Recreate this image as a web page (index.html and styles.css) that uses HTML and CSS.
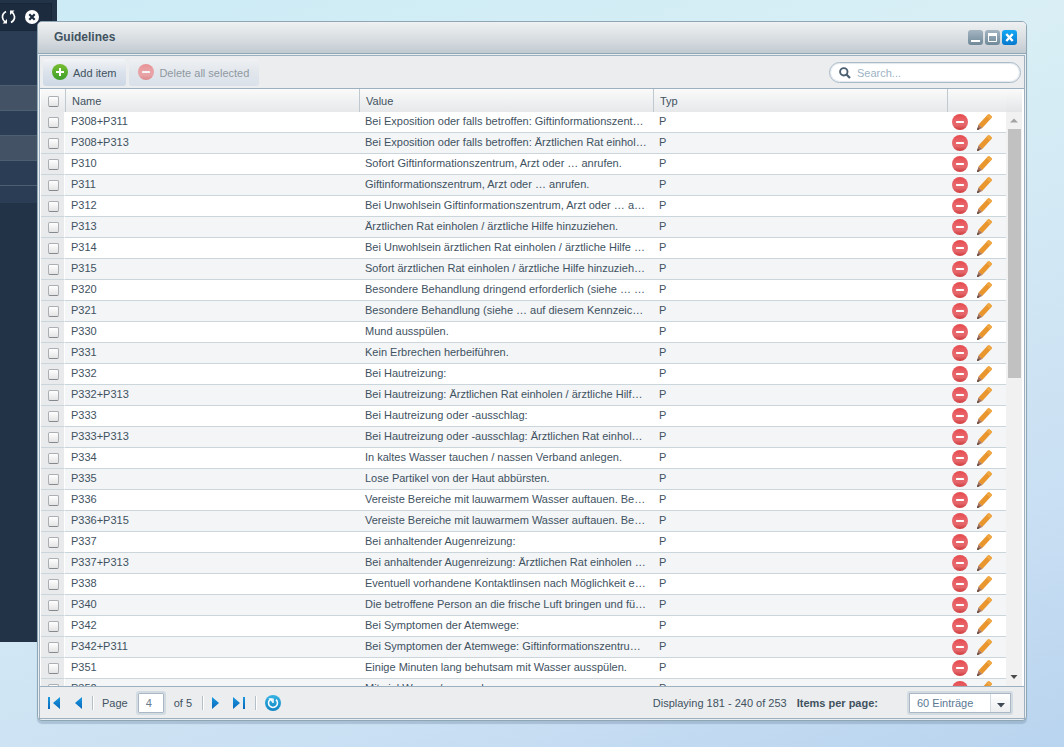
FILE: index.html
```
<!DOCTYPE html>
<html lang="en">
<head>
<meta charset="utf-8">
<title>Guidelines</title>
<link rel="stylesheet" href="styles.css">
</head>
<body>
<svg class="defs" aria-hidden="true">
  <linearGradient id="red" x1="0" y1="0" x2="0" y2="1"><stop offset="0" stop-color="#e64a4d"/><stop offset=".45" stop-color="#e8666b"/><stop offset=".7" stop-color="#e5676b"/><stop offset="1" stop-color="#cf3b3d"/></linearGradient>
  <linearGradient id="green" x1="0" y1="0" x2="0" y2="1"><stop offset="0" stop-color="#76bd30"/><stop offset="1" stop-color="#3f9f2d"/></linearGradient>
  <linearGradient id="blue" x1="0" y1="0" x2="0" y2="1"><stop offset="0" stop-color="#36b3e3"/><stop offset="1" stop-color="#1285c4"/></linearGradient>
  <linearGradient id="arrow" x1="0" y1="0" x2="0" y2="1"><stop offset="0" stop-color="#1a98e0"/><stop offset="1" stop-color="#0768bb"/></linearGradient>
  <symbol id="minus" viewBox="0 0 16 16"><circle cx="8" cy="8" r="8" fill="url(#red)"/><rect x="4" y="7" width="8" height="2" rx=".4" fill="#fff"/></symbol>
  <symbol id="plus" viewBox="0 0 16 16"><circle cx="8" cy="8" r="8" fill="url(#green)"/><path d="M4 8h8M8 4v8" stroke="#fff" stroke-width="2"/></symbol>
  <symbol id="pencil" viewBox="0 0 16 16"><path d="M1.500 10.600L10.600.7q1-1 2-.2l1.800 1.500q.9.900 0 2L5.300 14z" fill="#e9962e"/><path d="M9.200 2.200L10.600.7q1-1 2-.2l1.800 1.500q.9.900 0 2L13 5.500z" fill="#efa744"/><path d="M1.500 10.600L5.300 14 .7 16H0z" fill="#a4705a"/><path d="M.6 13.400L0 16h.7l2.200-1z" fill="#5d453c"/></symbol>
</svg>

<aside class="sidebar">
  <div class="side-bar">
    <button class="bare" type="button" aria-label="Refresh"><svg width="15" height="14" viewBox="0 0 15 14"><g fill="none" stroke="#fff" stroke-width="1.700"><path d="M5 1.500C2.500 3 1.200 5 1.500 7.500 1.700 9.500 2.700 11 4.200 12"/><path d="M10 12.500c2.500-1.500 3.800-3.500 3.500-6C13.300 4.500 12.300 3 10.800 2"/></g><path d="M6 9v4.500H1.500zM9 5V.5h4.500z" fill="#fff"/></svg></button>
    <button class="bare" type="button" aria-label="Close"><svg width="14" height="14" viewBox="0 0 14 14"><circle cx="7" cy="7" r="7" fill="#fff"/><path d="M4.300 4.300l5.400 5.400M9.700 4.300L4.300 9.700" stroke="#1c2b3d" stroke-width="2.200"/></svg></button>
  </div>
  <div class="side-space"></div>
  <div class="side-item light"></div>
  <div class="side-item"></div>
  <div class="side-item light"></div>
  <div class="side-item"></div>
  <div class="side-end"></div>
</aside>

<main class="window">
  <header class="titlebar">
    <h1>Guidelines</h1>
    <div class="tools">
      <button type="button" aria-label="Minimize"><svg width="15" height="15"><path d="M3 11h9" stroke="#fff" stroke-width="2"/></svg></button>
      <button type="button" aria-label="Maximize"><svg width="15" height="15"><path d="M3.500 4v7.500h8V4" fill="none" stroke="#fff"/><path d="M3 4.500h9" stroke="#fff" stroke-width="3"/></svg></button>
      <button type="button" class="close" aria-label="Close window"><svg width="15" height="15"><path d="M4.300 4l6.400 7M10.700 4L4.300 11" stroke="#fff" stroke-width="2.400"/></svg></button>
    </div>
  </header>
  <section class="panel">
    <div class="toolbar">
      <button class="btn" type="button"><svg width="16" height="16"><use href="#plus"/></svg>Add item</button>
      <button class="btn" type="button" disabled><svg width="16" height="16"><use href="#minus"/></svg>Delete all selected</button>
      <label class="search"><svg width="12" height="12" viewBox="0 0 12 12"><circle cx="4.800" cy="4.800" r="3.700" fill="none" stroke="#4a5f70" stroke-width="1.900"/><path d="M7.500 7.500L11 11" stroke="#4a5f70" stroke-width="2.200"/></svg><input type="search" placeholder="Search..." aria-label="Search"></label>
    </div>
    <div class="grid">
      <table>
        <colgroup><col class="c-check"><col><col><col><col class="c-act"></colgroup>
        <thead><tr><th><input type="checkbox" aria-label="Select all"></th><th>Name</th><th>Value</th><th>Typ</th><th></th></tr></thead>
        <tbody id="rows"></tbody>
      </table>
      <div class="scroll" aria-hidden="true">
        <div class="scroll-head"></div>
        <svg width="16" height="16"><path d="M4 10.500h8l-4-4z" fill="#a3a3a3"/></svg>
        <div class="track"><div class="thumb"></div></div>
        <svg width="16" height="16"><path d="M4.500 5h7L8 9z" fill="#4a4a4a"/></svg>
      </div>
    </div>
    <footer class="pager">
      <button class="nav" type="button" aria-label="First page"><svg width="13" height="12"><path d="M0 0h2v12H0zM12 0v12L5 6z" fill="url(#arrow)"/></svg></button>
      <button class="nav" type="button" aria-label="Previous page"><svg width="7" height="12"><path d="M7 0v12L0 6z" fill="url(#arrow)"/></svg></button>
      <span class="sep"></span>
      <label for="page">Page</label>
      <input id="page" class="page" type="text" value="4">
      <span>of 5</span>
      <span class="sep"></span>
      <button class="nav" type="button" aria-label="Next page"><svg width="7" height="12"><path d="M0 0v12l7-6z" fill="url(#arrow)"/></svg></button>
      <button class="nav" type="button" aria-label="Last page"><svg width="12" height="12"><path d="M10 0h2v12h-2zM0 0v12l7-6z" fill="url(#arrow)"/></svg></button>
      <span class="sep"></span>
      <button class="nav" type="button" aria-label="Reload"><svg width="16" height="16" viewBox="0 0 16 16"><circle cx="8" cy="8" r="8" fill="url(#blue)"/><path d="M11 4.600A4.500 4.500 0 1 1 5 4.600M8 8V3.500" fill="none" stroke="#fff" stroke-width="1.500"/><path d="M3.300 3.200h4.200v4.300z" fill="#fff"/></svg></button>
      <span class="info">Displaying 181 - 240 of 253</span>
      <label class="ipp" for="size">Items per page:</label>
      <span class="combo"><select id="size"><option>60 Einträge</option></select><span class="trigger"><svg width="8" height="5"><path d="M0 0h8L4 4.500z" fill="#3f4a55"/></svg></span></span>
    </footer>
  </section>
</main>
<script src="rows.js"></script>
</body>
</html>
```
FILE: styles.css
```
* { box-sizing: border-box; }
html { height: 100%; }
body {
  margin: 0; min-height: 100%; overflow: hidden; position: relative;
  font: 11px/14px "Liberation Sans", Arial, sans-serif; color: #41525f;
  background: linear-gradient(160deg, #cbebf6 0%, #d9eff5 35%, #c9dff3 78%, #b9d4ef 100%);
}
button, input, select { font: inherit; color: inherit; margin: 0; }
button { border: 0; padding: 0; background: none; }
svg { display: block; flex: none; }
.defs { position: absolute; width: 0; height: 0; }

.sidebar { position: absolute; left: 0; top: 0; bottom: 105px; width: 57px; background: #223348; }
.side-bar { height: 28px; margin: 3px 5px 0 0; padding: 0 12px 0 1px; display: flex; align-items: center; justify-content: space-between; background: #1c2b3d; border: 1px solid #18263a; border-left: 0; }
.side-space { height: 54px; background: #2b3d54; }
.side-item { height: 25px; background: #2b3d54; border-top: 1px solid #4d6072; }
.side-item.light { background: #435365; }
.side-end { height: 18px; background: #2b3d54; border-top: 1px solid #4d6072; }

.window {
  position: absolute; left: 37px; top: 21px; right: 37px; bottom: 26px;
  display: flex; flex-direction: column; padding: 0 1px 1px;
  border: 1px solid #8fa6b5; border-radius: 5px; background: #e9eef2;
  box-shadow: 0 3px 1px rgba(120, 145, 170, .4);
}
.titlebar {
  height: 32px; margin: 0 -1px 1px; padding: 0 9px 0 16px; border-radius: 4px 4px 0 0; border-bottom: 1px solid #8fa6b5;
  display: flex; align-items: center; justify-content: space-between;
  background: linear-gradient(#eff1f2, #dadfe2 50%, #c2cad2);
}
h1 { margin: 0; padding-bottom: 2px; font-size: 12px; line-height: 16px; color: #41525f; }
.tools { display: flex; gap: 2px; }
.tools button { border-radius: 3px; background: linear-gradient(#a4b5c1, #708999); }
.tools .close { background: linear-gradient(#14a9f5, #0678cd); }

.panel { flex: 1; min-height: 0; display: flex; flex-direction: column; border: 1px solid #9db0bf; background: #ebedef; }
.toolbar { height: 33px; padding: 1px 3px 0; display: flex; align-items: center; gap: 3px; border-bottom: 1px solid #9db0bf; }
.btn { height: 27px; padding: 0 10px 0 9px; display: flex; align-items: center; gap: 5px; border-radius: 3px; background: linear-gradient(#f2f4f6, #dbe2eb 50%, #cdd8e5); }
.btn svg { margin-bottom: 2px; }
.btn:disabled { opacity: .55; }
.search { flex: 0 1 192px; height: 21px; margin-left: auto; padding: 0 9px; display: flex; align-items: center; gap: 6px; border: 1px solid #a9bac8; border-radius: 11px; background: #fff; box-shadow: inset 0 0 1px 1px #e1e7ec; }
.search input { flex: 1; min-width: 0; border: 0; padding: 0; background: none; outline: 0; }
.search input::placeholder { color: #9db4c5; }

.grid { flex: 1; min-height: 0; overflow: hidden; display: flex; background: #fff; padding: 0 2px 0 1px; }
table { flex: 1; width: 100%; min-width: 0; align-self: flex-start; table-layout: fixed; border-collapse: separate; border-spacing: 0; }
.c-check { width: 24px; }
.c-act { width: 59px; }
th { height: 23px; padding: 1px 6px 0; text-align: left; font-weight: normal; background: linear-gradient(#fafafa, #e6e8ea); border-left: 1px solid #c0c9d0; }
th:first-child { border-left: 0; }
td { height: 21px; padding: 0 6px 2px; border-bottom: 1px solid #cbd5dc; white-space: nowrap; overflow: hidden; text-overflow: ellipsis; }
tr:nth-child(even) td { background: #f3f5f7; }
td:first-child, tr:nth-child(even) td:first-child { background: #e8eaec; border-right: 1px solid #fff; }
th:first-child, td:first-child { padding: 1px 0 0 7px; line-height: 0; }
input[type="checkbox"] { appearance: none; display: block; width: 11px; height: 11px; border: 1px solid #abafb3; border-bottom-color: #85898d; border-radius: 2px; background: linear-gradient(#fff, #e4e4e4); }
td:last-child { padding: 0 0 0 5px; }
.actions { display: flex; gap: 9px; }

.scroll { flex: 0 0 16px; display: flex; flex-direction: column; background: #f1f1f1; }
.scroll-head { height: 23px; background: linear-gradient(#fafafa, #e3e5e7); }
.track { flex: 1; padding: 1px 1px 0 2px; }
.thumb { height: 46%; background: #c1c1c1; }

.pager { height: 32px; padding: 0 13px 0 8px; display: flex; align-items: center; border-top: 1px solid #9db0bf; white-space: nowrap; }
.nav { margin-right: 10px; }
.nav + .nav { margin-left: 4px; }
.sep { width: 2px; height: 14px; margin-right: 8px; border-left: 1px solid #b5bfc7; border-right: 1px solid #fff; }
.page { width: 26px; height: 20px; margin: 0 10px; padding: 0 7px; border: 1px solid #a9b8c4; background: #fff; color: #667b8c; outline: 2px solid #d3dbe2; outline-offset: 0; border-radius: 1px; }
.page + span { margin-right: 10px; }
.info { margin-left: auto; }
.ipp { margin: 0 31px 0 10px; font-weight: bold; }
.combo { position: relative; display: flex; width: 102px; height: 20px; outline: 2px solid #d3dbe2; border-radius: 1px; }
.combo select { appearance: none; flex: 1; width: 100%; padding: 0 7px; border: 1px solid #a9b8c4; border-radius: 0; background: #fff; color: #5b7894; }
.trigger { position: absolute; right: 1px; top: 1px; bottom: 1px; width: 20px; display: flex; align-items: end; justify-content: center; padding-bottom: 4px; border-left: 1px solid #d3dbe2; background: linear-gradient(#fff, #eceef0); pointer-events: none; }
```
FILE: rows.js
```
const rows = [
  ["P308+P311", "Bei Exposition oder falls betroffen: Giftinformationszent…"],
  ["P308+P313", "Bei Exposition oder falls betroffen: Ärztlichen Rat einhol…"],
  ["P310", "Sofort Giftinformationszentrum, Arzt oder … anrufen."],
  ["P311", "Giftinformationszentrum, Arzt oder … anrufen."],
  ["P312", "Bei Unwohlsein Giftinformationszentrum, Arzt oder … a…"],
  ["P313", "Ärztlichen Rat einholen / ärztliche Hilfe hinzuziehen."],
  ["P314", "Bei Unwohlsein ärztlichen Rat einholen / ärztliche Hilfe …"],
  ["P315", "Sofort ärztlichen Rat einholen / ärztliche Hilfe hinzuzieh…"],
  ["P320", "Besondere Behandlung dringend erforderlich (siehe … …"],
  ["P321", "Besondere Behandlung (siehe … auf diesem Kennzeic…"],
  ["P330", "Mund ausspülen."],
  ["P331", "Kein Erbrechen herbeiführen."],
  ["P332", "Bei Hautreizung:"],
  ["P332+P313", "Bei Hautreizung: Ärztlichen Rat einholen / ärztliche Hilf…"],
  ["P333", "Bei Hautreizung oder -ausschlag:"],
  ["P333+P313", "Bei Hautreizung oder -ausschlag: Ärztlichen Rat einhol…"],
  ["P334", "In kaltes Wasser tauchen / nassen Verband anlegen."],
  ["P335", "Lose Partikel von der Haut abbürsten."],
  ["P336", "Vereiste Bereiche mit lauwarmem Wasser auftauen. Be…"],
  ["P336+P315", "Vereiste Bereiche mit lauwarmem Wasser auftauen. Be…"],
  ["P337", "Bei anhaltender Augenreizung:"],
  ["P337+P313", "Bei anhaltender Augenreizung: Ärztlichen Rat einholen …"],
  ["P338", "Eventuell vorhandene Kontaktlinsen nach Möglichkeit e…"],
  ["P340", "Die betroffene Person an die frische Luft bringen und fü…"],
  ["P342", "Bei Symptomen der Atemwege:"],
  ["P342+P311", "Bei Symptomen der Atemwege: Giftinformationszentru…"],
  ["P351", "Einige Minuten lang behutsam mit Wasser ausspülen."],
  ["P352", "Mit viel Wasser/… waschen."]
];
document.getElementById("rows").innerHTML = rows.map(([name, value]) => `
  <tr>
    <td><input type="checkbox" aria-label="Select ${name}"></td>
    <td>${name}</td><td>${value}</td><td>P</td>
    <td><div class="actions">
      <button type="button" aria-label="Delete ${name}"><svg width="16" height="16"><use href="#minus"/></svg></button>
      <button type="button" aria-label="Edit ${name}"><svg width="16" height="16"><use href="#pencil"/></svg></button>
    </div></td>
  </tr>`).join("");
```
